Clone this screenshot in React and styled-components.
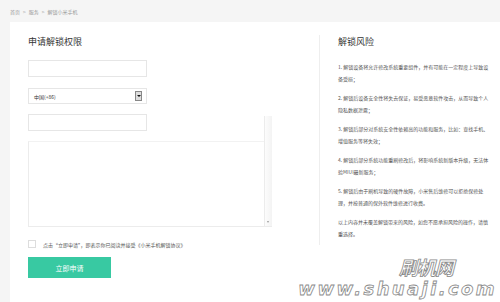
import React from "react";
import styled, { createGlobalStyle } from "styled-components";

const Global = createGlobalStyle`
  html, body { margin: 0; padding: 0; background: #f5f5f5; }
  body { width: 500px; height: 302px; overflow: hidden; position: relative;
    font-family: "Noto Sans CJK SC", "Liberation Sans", sans-serif; color: #333; }
`;

const Page = styled.div`
  width: 500px;
  height: 302px;
  position: relative;
  overflow: hidden;
`;

const Crumbs = styled.div`
  height: 22px;
  padding-left: 10px;
  display: flex;
  align-items: center;
  gap: 3px;
  font-size: 5px;
  color: #999;
`;

const Card = styled.div`
  margin-left: 10px;
  width: 500px;
  height: 290px;
  background: #fff;
  display: flex;
  align-items: flex-start;
`;

const LeftCol = styled.div`
  width: 291px;
  padding: 14px 0 0 18px;
  display: flex;
  flex-direction: column;
`;

const Title = styled.h2`
  margin: 0 0 12px;
  font-size: 9px;
  line-height: 12px;
  font-weight: 400;
  color: #333;
`;

const Field = styled.div`
  width: 119px;
  height: ${p => p.$h}px;
  box-sizing: border-box;
  border: 1px solid #e6e6e6;
  margin-bottom: ${p => p.$mb}px;
  display: flex;
  align-items: center;
  justify-content: space-between;
  padding: 0 4px 0 5px;
  font-size: 5px;
  color: #333;
`;

const DropBtn = styled.span`
  width: 7px;
  height: 10px;
  box-sizing: border-box;
  border: 1px solid #888;
  background: #ddd;
  display: flex;
  align-items: center;
  justify-content: center;
  &::after {
    content: "";
    border-left: 2px solid transparent;
    border-right: 2px solid transparent;
    border-top: 2px solid #111;
  }
`;

const TextArea = styled.div`
  width: 244px;
  height: 86px;
  box-sizing: border-box;
  border: 1px solid #ececec;
  border-top-color: #f2f2f2;
  border-right: none;
  position: relative;
  margin-bottom: 13px;
`;

const ScrollBar = styled.div`
  position: absolute;
  right: 0;
  bottom: 0;
  width: 7px;
  height: 110px;
  border-left: 1px solid #ececec;
  background: linear-gradient(to right, #fcfcfc, #f3f3f3);
  &::after {
    content: "";
    position: absolute;
    bottom: 3px;
    left: 2px;
    border-left: 1.5px solid transparent;
    border-right: 1.5px solid transparent;
    border-top: 2px solid #999;
  }
`;

const AgreeRow = styled.label`
  display: flex;
  align-items: center;
  gap: 7px;
  height: 8px;
  margin-bottom: 9px;
  font-size: 5px;
  color: #555;
`;

const Box = styled.span`
  width: 8px;
  height: 8px;
  box-sizing: border-box;
  border: 1px solid #ddd;
  background: #fff;
`;

const Submit = styled.button`
  width: 83px;
  height: 21px;
  border: none;
  background: #38c9a2;
  color: #fff;
  font-family: inherit;
  font-size: 7px;
  padding: 0;
`;

const RightCol = styled.div`
  margin-top: 13px;
  width: 151px;
  border-left: 1px solid #eeeeee;
  padding: 1px 0 6px 18px;
`;

const Para = styled.p`
  margin: 0 0 8px;
  font-size: 5px;
  line-height: 11.5px;
  color: #555;
  &:last-child { margin-bottom: 0; }
`;

const RTitle = styled(Title)`
  margin-bottom: 13px;
`;

const Mark = styled.div`
  position: absolute;
  right: 3px;
  bottom: 4px;
  display: flex;
  flex-direction: column;
  align-items: flex-end;
  gap: 3px;
  pointer-events: none;
  color: #fff;
  -webkit-text-stroke: 0.8px #8a8a8a;
  font-style: italic;
`;

const MarkCn = styled.div`
  font-size: 19px;
  line-height: 20px;
  margin-right: 44px;
  font-weight: 700;
  letter-spacing: -1px;
`;

const MarkEn = styled.div`
  font-family: "DejaVu Sans", sans-serif;
  font-weight: 700;
  font-size: 18px;
  line-height: 18px;
  letter-spacing: 2.4px;
`;

const risks = [
  "1. 解锁设备将允许修改系统重要组件，并有可能在一定程度上导致设备受损；",
  "2. 解锁后设备安全性将失去保证，易受恶意软件攻击，从而导致个人隐私数据泄露；",
  "3. 解锁后部分对系统安全性依赖高的功能和服务，比如：查找手机、增值服务等将失效；",
  "4. 解锁后部分系统功能重刷修改后，将影响系统新版本升级，无法体验MIUI最新服务；",
  "5. 解锁后由于刷机导致的硬件故障，小米售后维修可以拒绝保修处理，并按普通的保外软件维修进行收费。",
  "以上内容并未覆盖解锁带来的风险，如您不愿承担风险的操作，请慎重选择。",
];

export default function App() {
  return (
    <Page>
      <Global />
      <Crumbs>
        <span>首页</span><span>&gt;</span><span>服务</span><span>&gt;</span><span>解锁小米手机</span>
      </Crumbs>
      <Card>
        <LeftCol>
          <Title>申请解锁权限</Title>
          <Field $h={17} $mb={11} />
          <Field $h={16} $mb={10}>
            <span>中国(+86)</span>
            <DropBtn />
          </Field>
          <Field $h={17} $mb={10} />
          <TextArea>
            <ScrollBar />
          </TextArea>
          <AgreeRow>
            <Box />
            <span>点击“立即申请”，即表示你已阅读并接受《小米手机解锁协议》</span>
          </AgreeRow>
          <Submit>立即申请</Submit>
        </LeftCol>
        <RightCol>
          <RTitle>解锁风险</RTitle>
          {risks.map(t => <Para key={t}>{t}</Para>)}
        </RightCol>
      </Card>
      <Mark>
        <MarkCn>刷机网</MarkCn>
        <MarkEn>www.shuaji.com</MarkEn>
      </Mark>
    </Page>
  );
}
